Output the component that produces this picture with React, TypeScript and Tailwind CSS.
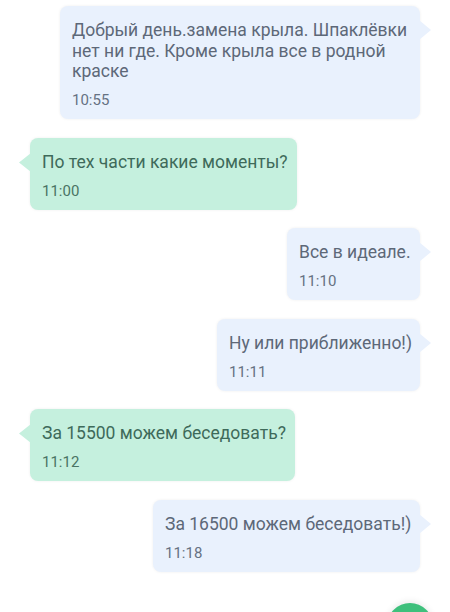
import React from "react";

/* ── chat data ─────────────────────────────────────── */
type Msg = { text: string; time: string; mine: boolean; w: string };

const messages: Msg[] = [
    { text: "Добрый день.замена крыла. Шпаклёвки нет ни где. Кроме крыла все в родной краске", time: "10:55", mine: true, w: "w-[360px]" },
    { text: "По тех части какие моменты?", time: "11:00", mine: false, w: "w-[267px]" },
    { text: "Все в идеале.", time: "11:10", mine: true, w: "w-[133px]" },
    { text: "Ну или приближенно!)", time: "11:11", mine: true, w: "w-[203px]" },
    { text: "За 15500 можем беседовать?", time: "11:12", mine: false, w: "w-[265px]" },
    { text: "За 16500 можем беседовать!)", time: "11:18", mine: true, w: "w-[267px]" },
];

/* ── single bubble with a little tail ─────────────── */
function Bubble({ m, first }: { m: Msg; first: boolean }) {
    const bg = m.mine ? "bg-[#e9f1fd]" : "bg-[#c5f0de]";
    const text = m.mine ? "text-[#5d6878]" : "text-[#3e6a5a]";
    const time = m.mine ? "text-[#667283]" : "text-[#4a7464]";
    const fill = m.mine ? "#e9f1fd" : "#c5f0de";

    return (
        <div className={`relative ${m.w} ${m.mine ? "self-end mr-[30px]" : "self-start ml-[30px]"}`}>
            <div className={`${bg} rounded-[8px] shadow-[0_0_3px_rgba(0,0,0,0.07)] pl-[12px] pr-[8px] pt-[14px] pb-[10px]`}>
                <p className={`${text} text-[17.5px] leading-[20.5px] ${first ? "" : "whitespace-nowrap"}`}>{m.text}</p>
                <p className={`${time} text-[15px] leading-[18px] mt-[9.5px]`}>{m.time}</p>
            </div>
            {m.mine ? (
                <svg className="absolute right-[-12px] top-[14px]" width="13" height="20" viewBox="0 0 13 20">
                    <path d="M0 0 L12 10 L0 20 Z" fill={fill} />
                </svg>
            ) : (
                <svg className="absolute left-[-12px] top-[15px]" width="13" height="19" viewBox="0 0 13 19">
                    <path d="M13 0 L1 9.5 L13 19 Z" fill={fill} />
                </svg>
            )}
        </div>
    );
}

export default function App() {
    return (
        <main
            className="relative w-[450px] h-[612px] overflow-hidden bg-white flex flex-col gap-[18.5px] pt-[6px]"
            style={{ fontFamily: "Roboto, 'Noto Sans', sans-serif" }}
        >
            {messages.map((m, i) => (
                <Bubble key={i} m={m} first={i === 0} />
            ))}

            {/* floating action button peeking in at the bottom */}
            <div className="absolute left-[387px] top-[603px] w-[46px] h-[46px] rounded-full bg-[#3ec07c] shadow-[0_-2px_6px_rgba(0,0,0,0.08)]" />
        </main>
    );
}
